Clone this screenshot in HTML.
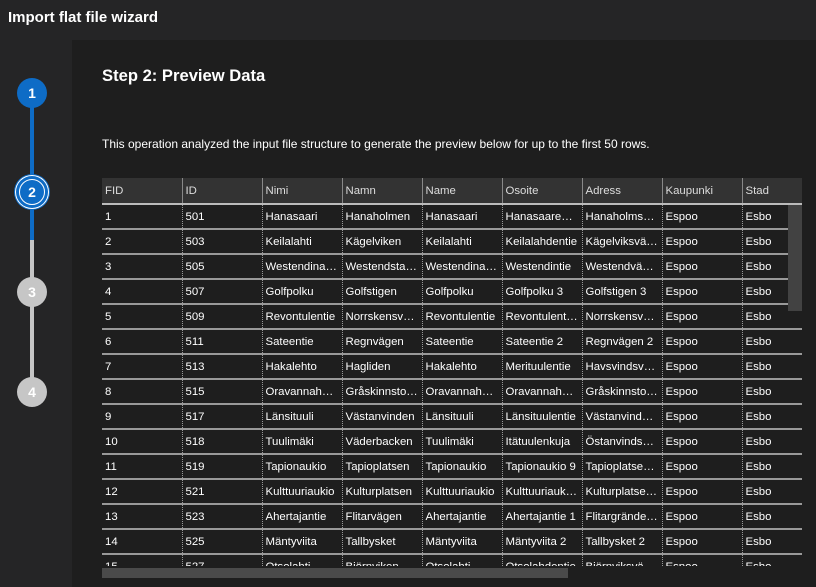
<!DOCTYPE html>
<html><head><meta charset="utf-8"><style>
*{margin:0;padding:0;box-sizing:border-box}
body{width:816px;height:587px;background:#252526;font-family:"Liberation Sans",sans-serif;color:#fff;position:relative;overflow:hidden}
.title{position:absolute;left:8px;top:9px;font-size:15px;font-weight:bold}
.main{position:absolute;left:72px;top:40px;width:744px;height:547px;background:#1e1e1e}
.h2{position:absolute;left:102px;top:66px;font-size:16.6px;font-weight:bold}
.desc{position:absolute;left:102px;top:137px;font-size:12px}
.c{position:absolute;left:17px;width:30px;height:30px;border-radius:50%;text-align:center;line-height:30px;font-size:14px;font-weight:bold}
.line{position:absolute;left:30px;width:4px}
.tw{position:absolute;left:102px;top:178px;width:700px;height:388px;overflow:hidden}
table{border-collapse:collapse;table-layout:fixed;width:700px;font-size:11.4px}
td,th{width:80px;height:25px;padding:0 3px;white-space:nowrap;overflow:hidden;text-overflow:ellipsis;text-align:left}
th{font-weight:normal;background:#333;height:26px;border-left:1px solid #888;border-bottom:2px solid #bbb;color:#ddd}
th:first-child{border-left:none}
td{border-left:1px dotted #999;border-bottom:2px solid #999;height:25px}
td:first-child{border-left:none}
th:last-child,td:last-child{width:60px}
</style></head><body>
<div class="title">Import flat file wizard</div>
<div class="main"></div>
<div class="line" style="top:100px;height:140px;background:#0e6cc6"></div>
<div class="line" style="top:240px;height:150px;background:#c6c6c6"></div>
<div class="c" style="top:78px;background:#0e6cc6">1</div>
<div class="c" style="top:177px;background:#0e6cc6;box-shadow:0 0 0 1px #0e6cc6,0 0 0 2px #fff,0 0 0 3px #0e6cc6"><span style="display:block;border:1px solid #fff;border-radius:50%;width:26px;height:26px;margin:2px;line-height:24px">2</span></div>
<div class="c" style="top:277px;background:#c6c6c6">3</div>
<div class="c" style="top:377px;background:#c6c6c6">4</div>
<div class="h2">Step 2: Preview Data</div>
<div class="desc">This operation analyzed the input file structure to generate the preview below for up to the first 50 rows.</div>
<div class="tw"><table>
<tr><th>FID</th><th>ID</th><th>Nimi</th><th>Namn</th><th>Name</th><th>Osoite</th><th>Adress</th><th>Kaupunki</th><th>Stad</th></tr>
<tr><td>1</td><td>501</td><td>Hanasaari</td><td>Hanaholmen</td><td>Hanasaari</td><td>Hanasaarenranta</td><td>Hanaholmsstranden</td><td>Espoo</td><td>Esbo</td></tr>
<tr><td>2</td><td>503</td><td>Keilalahti</td><td>Kägelviken</td><td>Keilalahti</td><td>Keilalahdentie</td><td>Kägelviksvägen</td><td>Espoo</td><td>Esbo</td></tr>
<tr><td>3</td><td>505</td><td>Westendinasema</td><td>Westendstationen</td><td>Westendinasema</td><td>Westendintie</td><td>Westendvägen</td><td>Espoo</td><td>Esbo</td></tr>
<tr><td>4</td><td>507</td><td>Golfpolku</td><td>Golfstigen</td><td>Golfpolku</td><td>Golfpolku 3</td><td>Golfstigen 3</td><td>Espoo</td><td>Esbo</td></tr>
<tr><td>5</td><td>509</td><td>Revontulentie</td><td>Norrskensvägen</td><td>Revontulentie</td><td>Revontulentie 1</td><td>Norrskensvägen</td><td>Espoo</td><td>Esbo</td></tr>
<tr><td>6</td><td>511</td><td>Sateentie</td><td>Regnvägen</td><td>Sateentie</td><td>Sateentie 2</td><td>Regnvägen 2</td><td>Espoo</td><td>Esbo</td></tr>
<tr><td>7</td><td>513</td><td>Hakalehto</td><td>Hagliden</td><td>Hakalehto</td><td>Merituulentie</td><td>Havsvindsvägen</td><td>Espoo</td><td>Esbo</td></tr>
<tr><td>8</td><td>515</td><td>Oravannahkatori</td><td>Gråskinnstorget</td><td>Oravannahkatori</td><td>Oravannahkatori</td><td>Gråskinnstorget</td><td>Espoo</td><td>Esbo</td></tr>
<tr><td>9</td><td>517</td><td>Länsituuli</td><td>Västanvinden</td><td>Länsituuli</td><td>Länsituulentie</td><td>Västanvindsvägen</td><td>Espoo</td><td>Esbo</td></tr>
<tr><td>10</td><td>518</td><td>Tuulimäki</td><td>Väderbacken</td><td>Tuulimäki</td><td>Itätuulenkuja</td><td>Östanvindsgränden</td><td>Espoo</td><td>Esbo</td></tr>
<tr><td>11</td><td>519</td><td>Tapionaukio</td><td>Tapioplatsen</td><td>Tapionaukio</td><td>Tapionaukio 9</td><td>Tapioplatsen 9</td><td>Espoo</td><td>Esbo</td></tr>
<tr><td>12</td><td>521</td><td>Kulttuuriaukio</td><td>Kulturplatsen</td><td>Kulttuuriaukio</td><td>Kulttuuriaukio 2</td><td>Kulturplatsen 2</td><td>Espoo</td><td>Esbo</td></tr>
<tr><td>13</td><td>523</td><td>Ahertajantie</td><td>Flitarvägen</td><td>Ahertajantie</td><td>Ahertajantie 1</td><td>Flitargränden 1</td><td>Espoo</td><td>Esbo</td></tr>
<tr><td>14</td><td>525</td><td>Mäntyviita</td><td>Tallbysket</td><td>Mäntyviita</td><td>Mäntyviita 2</td><td>Tallbysket 2</td><td>Espoo</td><td>Esbo</td></tr>
<tr><td>15</td><td>527</td><td>Otsolahti</td><td>Björnviken</td><td>Otsolahti</td><td>Otsolahdentie</td><td>Björnviksvägen</td><td>Espoo</td><td>Esbo</td></tr>
</table>
<div style="position:absolute;left:686px;top:27px;width:14px;height:106px;background:#424242"></div>
</div>
<div style="position:absolute;left:102px;top:568px;width:466px;height:10px;background:#4a4a4a"></div>
</body></html>
